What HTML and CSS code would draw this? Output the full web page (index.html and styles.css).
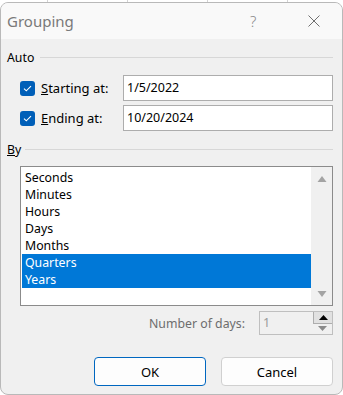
FILE: index.html
```html
<!DOCTYPE html>
<html lang="en">
<head>
  <meta charset="UTF-8" />
  <title>Grouping</title>
  <link rel="stylesheet" href="styles.css">
</head>
<body>
  <div class="sheet-strip"></div>
  <div class="dialog">
    <div class="titlebar">
      <span class="title">Grouping</span>
      <span class="help">?</span>
      <svg class="close" width="12" height="12" viewBox="0 0 12 12">
        <path d="M0.5 0.5 L11.5 11.5 M11.5 0.5 L0.5 11.5" stroke="#6f6f6f" stroke-width="1" fill="none"/>
      </svg>
    </div>

    <div class="content">
      <div class="group-head auto-head">
        <span>Auto</span>
        <div class="rule"></div>
      </div>

      <div class="field-row first">
        <span class="check">
          <svg width="15" height="15" viewBox="0 0 15 15"><path d="M4 7.6 L6.3 9.8 L11 5.2" stroke="#fff" stroke-width="1.1" fill="none"/></svg>
        </span>
        <label class="field-label"><u>S</u>tarting at:</label>
        <div class="textbox">1/5/2022</div>
      </div>
      <div class="field-row">
        <span class="check">
          <svg width="15" height="15" viewBox="0 0 15 15"><path d="M4 7.6 L6.3 9.8 L11 5.2" stroke="#fff" stroke-width="1.1" fill="none"/></svg>
        </span>
        <label class="field-label"><u>E</u>nding at:</label>
        <div class="textbox">10/20/2024</div>
      </div>

      <div class="group-head by-head">
        <span><u>B</u>y</span>
        <div class="rule"></div>
      </div>

      <div class="listbox">
        <ul class="items">
          <li>Seconds</li>
          <li>Minutes</li>
          <li>Hours</li>
          <li>Days</li>
          <li>Months</li>
          <li class="selected">Quarters</li>
          <li class="selected">Years</li>
        </ul>
        <div class="scrollbar">
          <svg width="10" height="8" viewBox="0 0 10 8"><path d="M5 1 L9.5 7 L0.5 7 Z" fill="#a3a3a3"/></svg>
          <svg width="10" height="8" viewBox="0 0 10 8"><path d="M0.5 1 L9.5 1 L5 7 Z" fill="#a3a3a3"/></svg>
        </div>
      </div>

      <div class="days-row">
        <span class="days-label">Number of days:</span>
        <div class="spinner">
          <span class="spin-value">1</span>
          <div class="spin-buttons">
            <div class="spin-btn up"><svg width="9" height="5" viewBox="0 0 9 5"><path d="M4.5 0 L9 5 L0 5 Z" fill="#000"/></svg></div>
            <div class="spin-btn down"><svg width="9" height="5" viewBox="0 0 9 5"><path d="M0 0 L9 0 L4.5 5 Z" fill="#8a8a8a"/></svg></div>
          </div>
        </div>
      </div>

      <div class="button-row">
        <button class="btn primary">OK</button>
        <button class="btn">Cancel</button>
      </div>
    </div>
  </div>
</body>
</html>
```

FILE: styles.css
```css
body {
  margin: 0;
  background: #fff;
  font-family: 'Noto Sans', 'Segoe UI', Arial, sans-serif;
  font-size: 12.3px;
  color: #000;
  width: 343px;
  height: 395px;
  overflow: hidden;
}
.sheet-strip {
  height: 2px;
  background:
    repeating-linear-gradient(90deg, transparent 0 47px, #d4d4d4 47px 48px, transparent 48px 80px);
}
.dialog {
  box-sizing: border-box;
  height: 393px;
  width: 343px;
  border: 1px solid #b9b9b9;
  border-radius: 8px;
  background: #f0f0f0;
  overflow: hidden;
}
.titlebar {
  height: 36px;
  background: #f9f9f9;
  display: flex;
  align-items: center;
}
.title {
  margin-left: 6px;
  font-size: 15px;
  color: #7a7a7a;
  flex: 1;
}
.help {
  font-size: 15px;
  color: #8a8a8a;
  font-weight: 300;
  width: 10px;
  margin-right: 48px;
}
.close {
  margin-right: 22px;
}
.content {
  padding: 0 9px 0 19px;
}
.group-head {
  display: flex;
  align-items: center;
  margin-left: -13px;
  height: 18px;
}
.group-head .rule {
  flex: 1;
  border-top: 1px solid #d7d7d7;
  margin-left: 6px;
}
.auto-head {
  margin-top: 9px;
}
.by-head .rule {
  margin-left: 4px;
}
.field-row {
  display: flex;
  align-items: center;
  height: 26px;
  margin-top: 4px;
}
.field-row.first {
  margin-top: 9px;
}
.check {
  width: 15px;
  height: 15px;
  border-radius: 3px;
  background: #005fb8;
  display: block;
}
.check svg {
  display: block;
}
.field-label {
  margin-left: 6px;
  width: 82px;
  font-size: 13px;
}
.textbox {
  box-sizing: border-box;
  width: 210px;
  height: 26px;
  border: 1px solid #adadad;
  background: #fff;
  padding: 0 0 0 3px;
  line-height: 24px;
  font-size: 12.5px;
}
.by-head {
  margin-top: 9px;
}
.listbox {
  box-sizing: border-box;
  height: 140px;
  margin-top: 8px;
  border: 1px solid #8b8b8b;
  background: #fff;
  display: flex;
}
.items {
  list-style: none;
  margin: 0;
  padding: 2px 0 0 1px;
  flex: 1;
}
.items li {
  height: 17px;
  line-height: 17px;
  padding-left: 3px;
}
.items li.selected {
  background: #0078d7;
  color: #fff;
}
.scrollbar {
  width: 21px;
  background: #f0f0f0;
  display: flex;
  flex-direction: column;
  justify-content: space-between;
  align-items: center;
  padding: 8px 0 7px;
}
.scrollbar svg {
  display: block;
}
.days-row {
  display: flex;
  justify-content: flex-end;
  align-items: center;
  margin-top: 5px;
}
.days-label {
  color: #6d6d6d;
  font-size: 12.3px;
  margin-right: 14px;
}
.spinner {
  box-sizing: border-box;
  width: 74px;
  height: 24px;
  border: 1px solid #bfbfbf;
  display: flex;
}
.spin-value {
  flex: 1;
  color: #9a9a9a;
  line-height: 22px;
  padding-left: 3px;
  font-size: 12.5px;
}
.spin-buttons {
  width: 19px;
  display: flex;
  flex-direction: column;
}
.spin-btn {
  flex: 1;
  display: flex;
  align-items: center;
  justify-content: center;
  background: #f0f0f0;
}
.spin-btn.up {
  background: #e1e1e1;
  border: 1px solid #adadad;
  border-top: 0;
  border-right: 0;
}
.spin-btn svg {
  display: block;
}
.button-row {
  display: flex;
  justify-content: flex-end;
  gap: 15px;
  margin-top: 22px;
}
.btn {
  box-sizing: border-box;
  width: 112px;
  height: 29px;
  border: 1px solid #d0d0d0;
  border-radius: 4px;
  background: #fdfdfd;
  font-family: inherit;
  font-size: 13px;
  color: #000;
  padding: 0;
}
.btn.primary {
  border-color: #0067c0;
}
```
